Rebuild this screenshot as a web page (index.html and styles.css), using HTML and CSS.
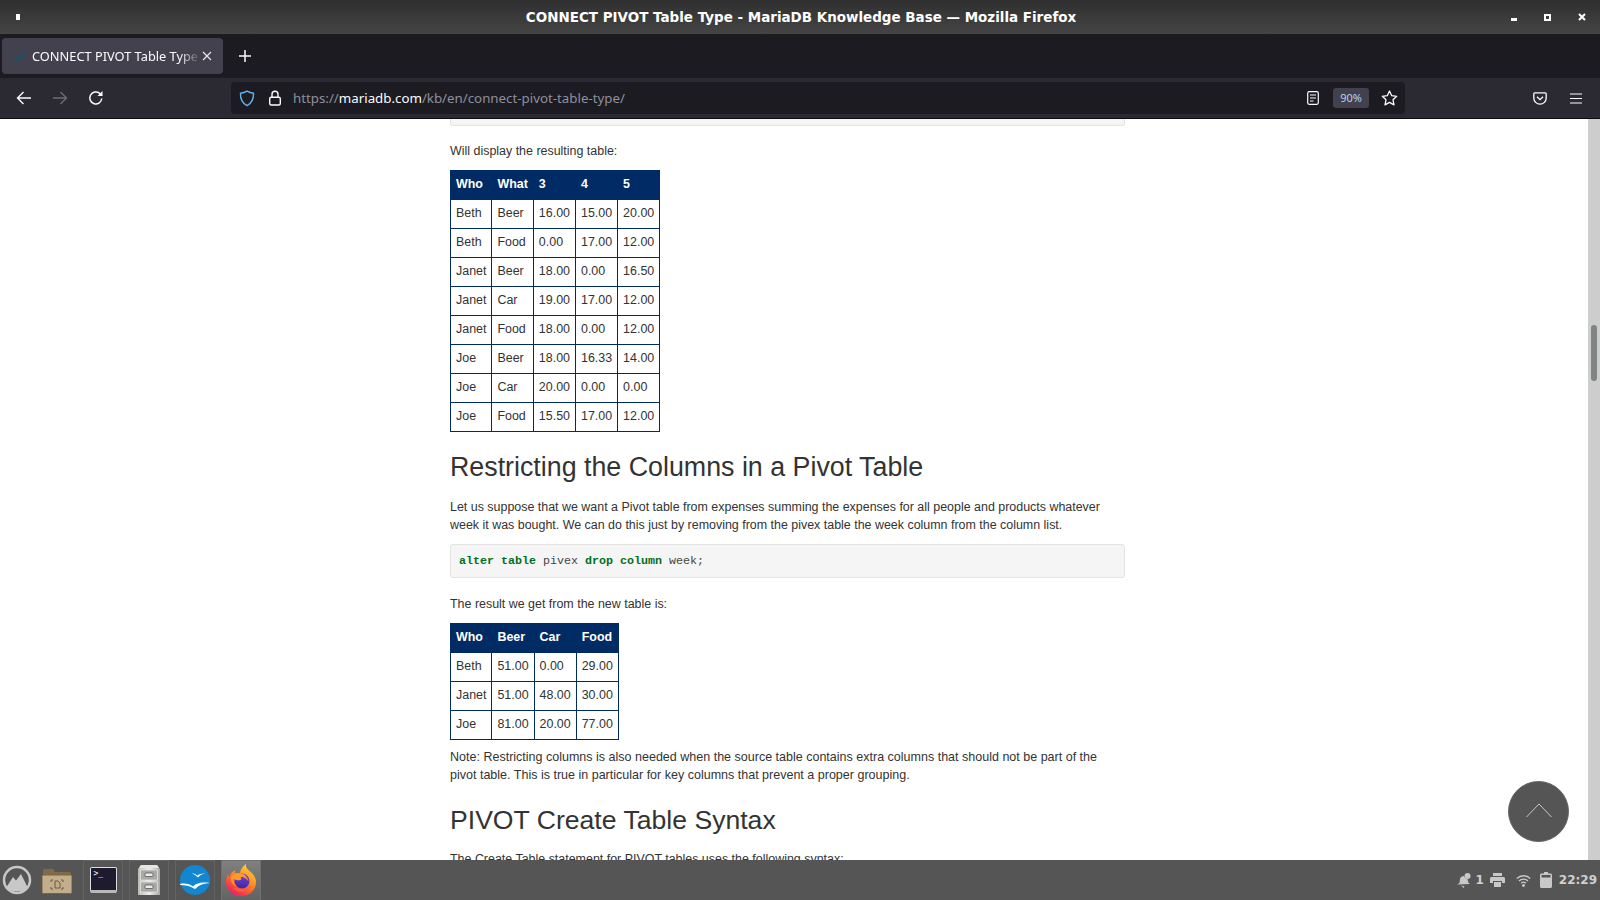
FILE: index.html
```html
<!DOCTYPE html>
<html lang="en">
<head>
  <meta charset="UTF-8" />
  <title>CONNECT PIVOT Table Type - MariaDB Knowledge Base — Mozilla Firefox</title>
  <link rel="stylesheet" href="styles.css">
</head>
<body>
  <header class="titlebar">
    <span class="win-left"><span class="win-menu"></span></span>
    <span class="win-title">CONNECT PIVOT Table Type - MariaDB Knowledge Base — Mozilla Firefox</span>
    <span class="win-buttons">
      <span class="win-min"></span>
      <span class="win-max"></span>
      <svg class="win-close" width="8" height="8" viewBox="0 0 8 8"><path d="M1 1l6 6M7 1l-6 6" stroke="#fff" stroke-width="2"/></svg>
    </span>
  </header>

  <div class="tabstrip">
    <div class="tab">
      <svg class="favicon" width="17" height="12" viewBox="0 0 17 12"><path d="M16.500 0c-1.500.8-3 1.200-4.200 2.200C10.800 3.500 10 5 8.500 6 6 7.500 3 7.800.5 11.500c1.800-1.300 3.300-1.900 5-2.200L5 11.500c1.800-.5 3.500-1.600 4.500-2.800 2-.5 3.300-2 4-4 .5-1.700 1.800-3.200 3-4.700z" fill="#1b5068"/></svg>
      <span class="tab-label">CONNECT PIVOT Table Type</span>
      <svg class="tab-close" width="10" height="10" viewBox="0 0 10 10"><path d="M1 1l8 8M9 1l-8 8" stroke="#e8e8ea" stroke-width="1.200"/></svg>
    </div>
    <svg class="new-tab" width="12" height="12" viewBox="0 0 12 12"><path d="M6 0v12M0 6h12" stroke="#fbfbfe" stroke-width="1.500"/></svg>
  </div>

  <nav class="navbar">
    <div class="nav-buttons">
      <svg width="16" height="16" viewBox="0 0 16 16" fill="none" stroke="#fbfbfe" stroke-width="1.400"><path d="M15 8H1.500M7.500 2L1.500 8l6 6"/></svg>
      <svg width="16" height="16" viewBox="0 0 16 16" fill="none" stroke="#6d6c75" stroke-width="1.400"><path d="M1 8h13.500M8.500 2l6 6-6 6"/></svg>
      <svg width="16" height="16" viewBox="0 0 16 16" fill="none" stroke="#fbfbfe" stroke-width="1.500"><path d="M13.800 8.500A6 6 0 1 1 11.500 3.200L14 5.500"/><path d="M14.500 1v5h-5" fill="#fbfbfe" stroke="none"/></svg>
    </div>
    <div class="urlbar">
      <svg class="url-shield" width="16" height="17" viewBox="0 0 16 17" fill="none" stroke="#5fb4f0" stroke-width="1.400"><path d="M8 1.200c2 1.300 4 1.900 6.500 2 .2 5.500-1.800 10-6.500 12.400C3.300 13.200 1.300 8.700 1.500 3.200 4 3.100 6 2.500 8 1.200z"/></svg>
      <svg class="url-lock" width="14" height="16" viewBox="0 0 14 16" fill="none" stroke="#fbfbfe" stroke-width="1.400"><rect x="1.700" y="7.200" width="10.600" height="7.800" rx="1.500"/><path d="M4 7V4.300a3 3 0 0 1 6 0V7"/></svg>
      <span class="url-text">https://<b>mariadb.com</b>/kb/en/connect-pivot-table-type/</span>
      <svg class="url-reader" width="12" height="14" viewBox="0 0 12 14" fill="none" stroke="#fbfbfe" stroke-width="1.200"><rect x=".7" y=".7" width="10.600" height="12.600" rx="1.500"/><path d="M3 4h6M3 7h6M3 10h3.500"/></svg>
      <span class="url-zoom">90%</span>
      <svg class="url-star" width="17" height="16" viewBox="0 0 17 16" fill="none" stroke="#fbfbfe" stroke-width="1.300"><path d="M8.500 1l2.200 4.700 5 .6-3.700 3.500 1 5.100-4.500-2.500L4 14.900l1-5.100L1.300 6.300l5-.6z" stroke-linejoin="round"/></svg>
    </div>
    <div class="nav-right">
      <svg width="14" height="13" viewBox="0 0 14 13" fill="none" stroke="#fbfbfe" stroke-width="1.300"><path d="M1.800.8h10.400c.6 0 1 .4 1 1V6a6.200 6.200 0 0 1-12.400 0V1.800c0-.6.400-1 1-1z"/><path d="M4 4.700l3 3 3-3"/></svg>
      <svg width="12" height="11" viewBox="0 0 12 11" fill="none" stroke="#fbfbfe" stroke-width="1.200"><path d="M0 1h12M0 5.500h12M0 10h12"/></svg>
    </div>
  </nav>

  <div class="viewport">
    <main class="page">
      <div class="code-end"></div>
      <p>Will display the resulting table:</p>
      <table>
        <tr><th>Who</th><th>What</th><th>3</th><th>4</th><th>5</th></tr>
        <tr><td>Beth</td><td>Beer</td><td>16.00</td><td>15.00</td><td>20.00</td></tr>
        <tr><td>Beth</td><td>Food</td><td>0.00</td><td>17.00</td><td>12.00</td></tr>
        <tr><td>Janet</td><td>Beer</td><td>18.00</td><td>0.00</td><td>16.50</td></tr>
        <tr><td>Janet</td><td>Car</td><td>19.00</td><td>17.00</td><td>12.00</td></tr>
        <tr><td>Janet</td><td>Food</td><td>18.00</td><td>0.00</td><td>12.00</td></tr>
        <tr><td>Joe</td><td>Beer</td><td>18.00</td><td>16.33</td><td>14.00</td></tr>
        <tr><td>Joe</td><td>Car</td><td>20.00</td><td>0.00</td><td>0.00</td></tr>
        <tr><td>Joe</td><td>Food</td><td>15.50</td><td>17.00</td><td>12.00</td></tr>
      </table>
      <h2>Restricting the Columns in a Pivot Table</h2>
      <p>Let us suppose that we want a Pivot table from expenses summing the expenses for all people and products whatever week it was bought. We can do this just by removing from the pivex table the week column from the column list.</p>
      <pre class="code"><span class="kw">alter</span> <span class="kw">table</span> pivex <span class="kw">drop</span> <span class="kw">column</span> week;</pre>
      <p>The result we get from the new table is:</p>
      <table>
        <tr><th>Who</th><th>Beer</th><th>Car</th><th>Food</th></tr>
        <tr><td>Beth</td><td>51.00</td><td>0.00</td><td>29.00</td></tr>
        <tr><td>Janet</td><td>51.00</td><td>48.00</td><td>30.00</td></tr>
        <tr><td>Joe</td><td>81.00</td><td>20.00</td><td>77.00</td></tr>
      </table>
      <p class="note">Note: Restricting columns is also needed when the source table contains extra columns that should not be part of the pivot table. This is true in particular for key columns that prevent a proper grouping.</p>
      <h2 class="syntax">PIVOT Create Table Syntax</h2>
      <p>The Create Table statement for PIVOT tables uses the following syntax:</p>
    </main>
    <div class="scrollbar"><div class="thumb"></div></div>
    <button class="to-top">
      <svg width="26" height="15" viewBox="0 0 26 15" fill="none" stroke="#c9c9c9" stroke-width="1"><path d="M.5 14L13 1l12.500 13"/></svg>
    </button>
  </div>

  <footer class="taskbar">
    <svg class="start" width="30" height="30" viewBox="0 0 30 30"><circle cx="15" cy="15" r="13" fill="none" stroke="#c8c8c8" stroke-width="2.500"/><path d="M4.500 22L11 12l3 3.500L19 9l6.500 13c-2.500 3-6 4.500-10.500 4.500S7 25 4.500 22z" fill="#c8c8c8"/></svg>
    <svg class="folder" width="30" height="26" viewBox="0 0 30 26"><path d="M1 3c0-1 .6-2 2-2h8l2 3h14c1 0 2 .6 2 2v4H1z" fill="#7f6a4c"/><path d="M1 7h28c.6 0 1 .4 1 1v16c0 1-.6 1.500-1.500 1.500h-27C.6 25.500 0 25 0 24V8c0-.6.400-1 1-1z" fill="#c2ae8a" stroke="#7a6240"/><path d="M11 12h-2v2M19 12h2v2M11 21H9v-2M19 21h2v-2M13 13h3l2 2v5h-5z" fill="none" stroke="#6e5b3e"/></svg>
    <span class="task-btn">
      <span class="term"><span class="term-prompt">&gt;_</span></span>
    </span>
    <span class="task-btn">
      <svg width="22" height="30" viewBox="0 0 22 30"><defs><linearGradient id="cab" x1="0" y1="0" x2="1" y2="0"><stop offset="0" stop-color="#b9bbb6"/><stop offset=".5" stop-color="#f0f0ee"/><stop offset="1" stop-color="#a5a7a2"/></linearGradient></defs><path d="M3 0h16l3 4v26H0V4z" fill="url(#cab)"/><path d="M3 0h16l2 3H1z" fill="#e6e6e4"/><rect x="2.500" y="5" width="17" height="10" fill="#a8aaa5" stroke="#e8e8e6" stroke-width=".7"/><rect x="2.500" y="17" width="17" height="10" fill="#a8aaa5" stroke="#e8e8e6" stroke-width=".7"/><rect x="7" y="8" width="8" height="3.500" rx="1" fill="#ececec" stroke="#555" stroke-width=".8"/><rect x="7" y="20" width="8" height="3.500" rx="1" fill="#ececec" stroke="#555" stroke-width=".8"/></svg>
    </span>
    <span class="task-btn">
      <svg width="30" height="30" viewBox="0 0 30 30"><circle cx="15" cy="15" r="15" fill="#1287cf"/><path d="M0 19c5-1 10 0 13 2.500 2-3 9-5 17-3.500-6 .2-11 2-14 5.200-1 .8-1.500.8-2.500 0C10 21 5 20 .2 20z" fill="#fff"/><path d="M12 8.500c2 0 4 .5 5.500 2.200 1-1.500 4-2.500 8-2.200-3.500.6-5.500 1.600-7 3.500-.5.400-.8.400-1.200 0C16 10.500 14.500 9.300 12 8.500z" fill="#fff"/></svg>
    </span>
    <span class="task-btn task-active">
      <svg width="30" height="32" viewBox="0 0 30 32"><defs><linearGradient id="fx" x1=".8" y1="0" x2=".2" y2="1"><stop offset="0" stop-color="#ffd83a"/><stop offset=".45" stop-color="#ff8a1f"/><stop offset=".85" stop-color="#f5304f"/><stop offset="1" stop-color="#e31587"/></linearGradient><linearGradient id="fxg" x1=".5" y1="0" x2=".5" y2="1"><stop offset="0" stop-color="#7b3fe0"/><stop offset="1" stop-color="#3a2a9a"/></linearGradient></defs><path d="M20 0c-.5 3 1 5 3.500 7 4 3 6.500 7 6.500 11 0 8-6.500 14-15 14S0 26 0 18c0-3 .7-6 2-8 .2 1.500.7 2.500 1.500 3C4 9.500 6.500 7 9.500 6.500 9 7.500 8.500 8.500 8.500 9.500c2-.5 4-.5 5.500 0C14 6 16.500 2.500 20 0z" fill="url(#fx)"/><circle cx="16" cy="17" r="7.500" fill="url(#fxg)"/><path d="M5 13c2.500-3.500 7-5 11-3.500 3.500 1.200 6 4.500 6.500 8-2-3.500-5-5-8-4.500 1 .8 1 2 0 3-2.500.8-5.500-.2-7-1.500-.5 3 1 6.500 4 8.500-4-1-7.500-5-6.500-10z" fill="#ff9a2a"/><path d="M7 24c3 3.500 7.500 4.500 11 3.500 3.500-1 5.500-3.500 6.500-6-2.500 2.500-6 3.800-9.500 3.300-3-.3-5.500-1-8-.8z" fill="#ff5a3c"/></svg>
    </span>
    <div class="tray">
      <svg width="15" height="15" viewBox="0 0 15 15" fill="#c8c8c8"><path d="M1 11.500l2.500-1.500L4 6c.3-2 2-3 4-3 .2 1.500 1.500 3 3.500 3l.8 3.500 1.700 1.500z"/><circle cx="11.500" cy="3" r="3"/><path d="M5 12.500l3.500 1-1 1.500z"/></svg>
      <span class="tray-num">1</span>
      <svg class="tray-print" width="15" height="14" viewBox="0 0 15 14" fill="#c8c8c8"><path d="M3 0h9v3H3zM1.500 4h12c.8 0 1.500.7 1.500 1.500V10h-3V8H3v2H0V5.500C0 4.700.7 4 1.500 4zM4 9h7v5H4z"/></svg>
      <svg class="tray-wifi" width="15" height="13" viewBox="0 0 15 13" fill="none" stroke="#c8c8c8" stroke-width="1.300"><path d="M.8 4.500a9.500 9.500 0 0 1 13.400 0M3 7a6.400 6.400 0 0 1 9 0M5.200 9.200a3.200 3.200 0 0 1 4.600 0"/><circle cx="7.500" cy="11.500" r="1.400" fill="#c8c8c8" stroke="none"/></svg>
      <svg class="tray-battery" width="12" height="16" viewBox="0 0 12 16"><path d="M4 0h4v1.500h2.500c.8 0 1.500.7 1.500 1.500v11.500c0 .8-.7 1.500-1.500 1.500h-9C.7 16 0 15.300 0 14.500V3c0-.8.7-1.500 1.500-1.500H4z" fill="#c8c8c8"/><rect x="1.500" y="3" width="9" height="2.500" fill="#555"/></svg>
      <span class="clock">22:29</span>
    </div>
  </footer>
</body>
</html>
```

FILE: styles.css
```css
* {
  box-sizing: border-box;
}
html, body {
  height: 100%;
}
body {
  margin: 0;
  display: flex;
  flex-direction: column;
  overflow: hidden;
  font-family: "Noto Sans", sans-serif;
  background: #fff;
}

/* window title */
.titlebar {
  height: 34px;
  flex: none;
  display: grid;
  grid-template-columns: 1fr auto 1fr;
  align-items: center;
  padding: 0 14px 0 16px;
  background: linear-gradient(#2f2f2f, #454545);
  color: #fff;
}
.win-left {
  display: flex;
}
.win-menu {
  width: 4px;
  height: 6px;
  background: #fff;
}
.win-title {
  font-family: "DejaVu Sans", sans-serif;
  font-size: 13.47px;
  font-weight: 700;
}
.win-buttons {
  display: flex;
  align-items: center;
  justify-content: flex-end;
  gap: 27px;
}
.win-min {
  width: 6px;
  height: 3px;
  margin-top: 5px;
  background: #fff;
}
.win-max {
  width: 7px;
  height: 7px;
  border: 2px solid #fff;
}

/* tabs */
.tabstrip {
  height: 44px;
  flex: none;
  display: flex;
  align-items: center;
  padding-left: 2px;
  background: #1c1b22;
}
.tab {
  width: 221px;
  height: 36px;
  display: flex;
  align-items: center;
  padding: 0 11px 0 9px;
  background: #42414d;
  border-radius: 4px;
  color: #fbfbfe;
  font-size: 12.8px;
}
.favicon {
  flex: none;
  margin-right: 4px;
}
.tab-label {
  flex: 1;
  overflow: hidden;
  white-space: nowrap;
  -webkit-mask-image: linear-gradient(to right, #000 88%, rgba(0, 0, 0, .1));
  mask-image: linear-gradient(to right, #000 88%, rgba(0, 0, 0, .1));
}
.tab-close {
  flex: none;
  margin-left: 3px;
}
.new-tab {
  margin-left: 16px;
}

/* toolbar */
.navbar {
  height: 41px;
  flex: none;
  display: flex;
  align-items: center;
  background: #2b2a33;
  border-bottom: 1px solid #0c0c0d;
}
.nav-buttons {
  width: 231px;
  flex: none;
  display: flex;
  align-items: center;
  gap: 20px;
  padding-left: 16px;
}
.urlbar {
  width: 1174px;
  height: 32px;
  flex: none;
  display: flex;
  align-items: center;
  padding: 0 7px 0 8px;
  background: #1c1b22;
  border-radius: 4px;
  color: #fbfbfe;
}
.url-lock {
  margin-left: 13px;
}
.url-text {
  flex: 1;
  margin-left: 11px;
  font-size: 13.3px;
  color: #8f8f9d;
}
.url-text b {
  font-weight: 400;
  color: #fbfbfe;
}
.url-zoom {
  width: 36px;
  height: 20px;
  margin: 0 12px 0 14px;
  background: #42414d;
  border-radius: 3px;
  font-size: 11px;
  line-height: 20px;
  text-align: center;
  color: #b5d3f5;
}
.nav-right {
  flex: 1;
  display: flex;
  align-items: center;
  justify-content: flex-end;
  gap: 23px;
  padding-right: 18px;
}

/* page area */
.viewport {
  position: relative;
  flex: 1;
  min-height: 0;
  display: flex;
  overflow: hidden;
}
.page {
  flex: 1;
  min-width: 0;
  padding-left: 450px;
  font-family: "Liberation Sans", Arial, sans-serif;
  font-size: 12.45px;
  line-height: 18px;
  color: #333;
}
.page > * {
  width: 675px;
}
.code-end {
  height: 7px;
  background: #f5f5f5;
  border: 1px solid #e3e3e3;
  border-top: 0;
  border-radius: 0 0 3px 3px;
}
p {
  margin: 0;
}
.page > p {
  width: 668px;
}
.code-end + p {
  margin-top: 16px;
}
.page table {
  width: auto;
  margin-top: 10px;
  border-collapse: collapse;
}
th, td {
  padding: 4px 5px 6px;
  border: 1px solid #002b64;
  text-align: left;
}
th {
  background: #002b64;
  color: #fff;
}
h2 {
  margin: 17px 0 13px;
  font-size: 26.8px;
  font-weight: 400;
  line-height: 36px;
  color: #333;
}
.code {
  height: 34px;
  margin: 10px 0 17px;
  padding: 0 8px;
  background: #f5f5f5;
  border: 1px solid #e3e3e3;
  border-radius: 3px;
  font-family: "Liberation Mono", monospace;
  font-size: 11.67px;
  line-height: 32px;
  color: #444;
}
.kw {
  font-weight: 700;
  color: #007020;
}
.note {
  margin-top: 8px;
  font-size: 12.52px;
}
.syntax {
  margin: 18px 0 12px;
  font-size: 26.6px;
}

.scrollbar {
  width: 12px;
  flex: none;
  padding: 206px 3px 0;
  background: #cdcdcd;
}
.thumb {
  height: 56px;
  background: #808484;
  border-radius: 3px;
}
.to-top {
  position: absolute;
  left: 1508px;
  top: 662px;
  width: 61px;
  height: 61px;
  display: flex;
  align-items: center;
  justify-content: center;
  padding: 0 0 2px;
  background: #555;
  border: 1px solid #666;
  border-radius: 50%;
}

/* desktop panel */
.taskbar {
  height: 40px;
  flex: none;
  display: flex;
  align-items: center;
  background: #555;
}
.start {
  margin: 0 10px 0 2px;
}
.folder {
  margin: 2px 11px 0 0;
}
.task-btn {
  width: 40px;
  height: 40px;
  margin-right: 6px;
  padding-bottom: 2px;
  display: flex;
  align-items: center;
  justify-content: center;
  border: 1px solid #636363;
  border-bottom: 0;
}
.task-active {
  background: linear-gradient(#808080, #636363);
  border-color: #707070;
}
.term {
  width: 27px;
  height: 26px;
  background: #1f1b2e;
  border: 1px solid #ddd;
  border-bottom: 3px solid #b9b9b9;
  border-radius: 2px;
  color: #fff;
}
.term-prompt {
  display: block;
  padding-left: 3px;
  font-family: "DejaVu Sans Mono", monospace;
  font-size: 8px;
  line-height: 12px;
}
.tray {
  margin-left: auto;
  display: flex;
  align-items: center;
  padding-right: 3px;
  color: #d0d0d0;
}
.tray-num {
  margin-left: 4px;
  font-family: "DejaVu Sans", sans-serif;
  font-size: 12px;
  font-weight: 700;
}
.tray-print {
  margin-left: 6px;
}
.tray-wifi {
  margin-left: 11px;
}
.tray-battery {
  margin-left: 9px;
}
.clock {
  margin-left: 7px;
  font-family: "DejaVu Sans", sans-serif;
  font-size: 12px;
  font-weight: 700;
}
```
